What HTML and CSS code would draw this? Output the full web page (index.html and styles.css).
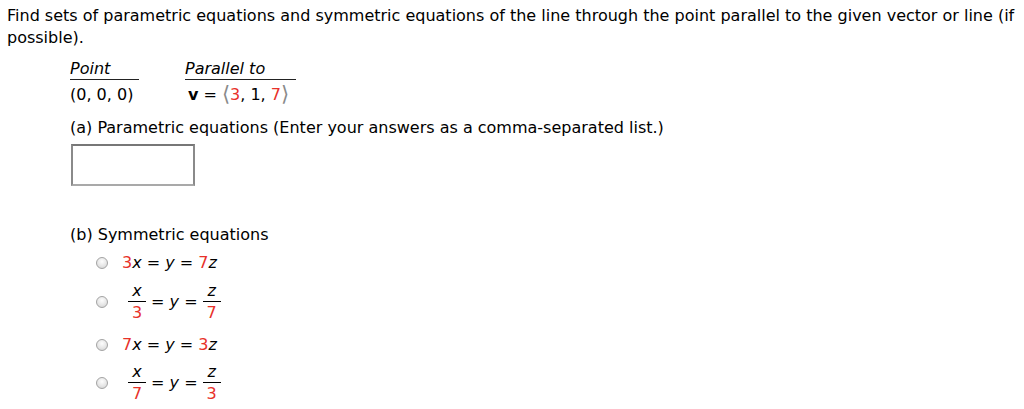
FILE: index.html
```html
<!DOCTYPE html>
<html>
<head>
<meta charset="utf-8">
<link rel="stylesheet" href="styles.css">
</head>
<body>
<div class="page">
  <p class="question">Find sets of parametric equations and symmetric equations of the line through the point parallel to the given vector or line (if possible).</p>
  <div class="body">
    <div class="given">
      <div class="head">Point</div>
      <div class="head">Parallel to</div>
      <div class="cell">(0, 0, 0)</div>
      <div class="cell vec"><b>v</b> = <span class="ang">⟨</span><span class="red">3</span>, 1, <span class="red">7</span><span class="ang">⟩</span></div>
    </div>
    <div class="part-a">(a) Parametric equations (Enter your answers as a comma-separated list.)</div>
    <div class="answer-box"></div>
    <div class="part-b">(b) Symmetric equations</div>
    <ul class="options">
      <li class="opt"><span class="radio"></span><span class="eq"><span class="red">3</span><i>x</i> = <i>y</i> = <span class="red">7</span><i>z</i></span></li>
      <li class="opt frac-row"><span class="radio"></span><span class="eq"><span class="frac"><i class="num">x</i><span class="den red">3</span></span> = <i>y</i> = <span class="frac"><i class="num">z</i><span class="den red">7</span></span></span></li>
      <li class="opt"><span class="radio"></span><span class="eq"><span class="red">7</span><i>x</i> = <i>y</i> = <span class="red">3</span><i>z</i></span></li>
      <li class="opt frac-row"><span class="radio"></span><span class="eq"><span class="frac"><i class="num">x</i><span class="den red">7</span></span> = <i>y</i> = <span class="frac"><i class="num">z</i><span class="den red">3</span></span></span></li>
    </ul>
  </div>
</div>
</body>
</html>
```
FILE: styles.css
```css
html, body {
  margin: 0;
  padding: 0;
  background: #fff;
}
.page {
  font-family: "DejaVu Sans", Verdana, sans-serif;
  font-size: 16px;
  line-height: 22px;
  color: #000;
  padding: 5px 4px 0 7px;
}
.question {
  margin: 0;
}
.body {
  padding-left: 63px;
}
.given {
  display: grid;
  grid-template-columns: 69px 111px;
  column-gap: 46px;
  margin-top: 10px;
}
.head {
  font-style: italic;
  border-bottom: 1px solid #222;
  line-height: 20px;
}
.cell {
  padding-top: 4px;
}
.vec {
  padding-left: 3px;
}
.ang {
  color: #8a8a8a;
  font-size: 21px;
  line-height: 0;
  font-weight: 300;
  vertical-align: -1px;
}
.red {
  color: #e8312a;
}
.part-a {
  margin-top: 11px;
}
.answer-box {
  width: 120px;
  height: 38px;
  margin: 5px 0 0 1px;
  border: 2px solid #8a8a8a;
  border-top-color: #777;
  border-bottom-color: #a9a9a9;
}
.part-b {
  margin-top: 38px;
}
.options {
  list-style: none;
  margin: 0;
  padding: 0 0 0 26px;
}
.opt {
  display: flex;
  align-items: center;
  height: 28px;
  margin-top: 3px;
}
.frac-row {
  height: 44px;
  margin-top: 3px;
}
.frac-row + .opt {
  margin-top: 7px;
}
.opt + .frac-row {
  margin-top: 2px;
}
.opt:first-child + .frac-row {
  margin-top: 3px;
}
.radio {
  width: 12px;
  height: 12px;
  border-radius: 50%;
  box-sizing: border-box;
  border: 1px solid #a3a3a3;
  background: radial-gradient(circle at 50% 35%, #fdfdfd 0%, #e6e6e6 55%, #cfcfcf 100%);
  margin-right: 14px;
  flex: none;
}
.eq {
  display: inline-flex;
  align-items: center;
  white-space: pre;
}
.eq i {
  font-style: italic;
}
.frac {
  display: inline-flex;
  flex-direction: column;
  align-items: center;
}
.eq > .frac:first-child {
  margin-left: 6px;
}
.frac .num {
  display: block;
  line-height: 18px;
  padding-bottom: 1px;
  border-bottom: 1px solid #000;
  width: 18px;
  text-align: center;
}
.frac .den {
  display: block;
  line-height: 18px;
  padding-top: 2px;
}
```
